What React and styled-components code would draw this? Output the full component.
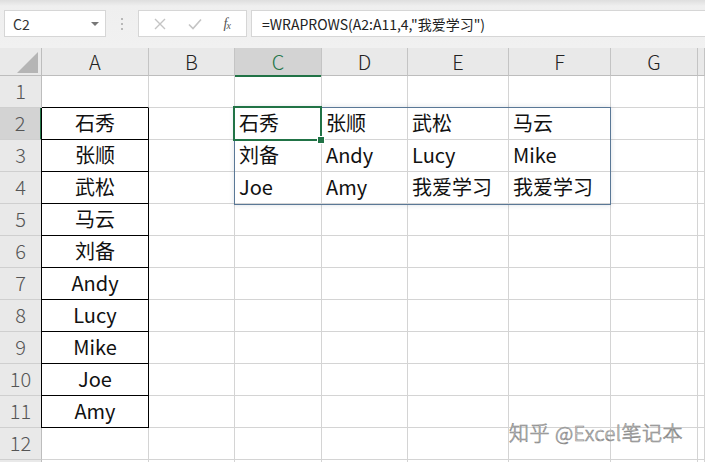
import React from 'react';
import styled, { createGlobalStyle } from 'styled-components';

const FONT = '"Noto Sans CJK SC", "Noto Sans", sans-serif';
const GREEN = '#217346';

const GlobalStyle = createGlobalStyle`
  html, body { margin: 0; padding: 0; background: #fff; overflow: hidden; }
  body { font-family: ${FONT}; }
`;

// column widths include the 1px right border
const COLS = [42, 107, 86, 87, 86, 101, 102, 87];
const LETTERS = ['A', 'B', 'C', 'D', 'E', 'F', 'G', ''];
const ROW_H = 32;

const names = ['石秀', '张顺', '武松', '马云', '刘备', 'Andy', 'Lucy', 'Mike', 'Joe', 'Amy'];
const spill = [
  ['石秀', '张顺', '武松', '马云'],
  ['刘备', 'Andy', 'Lucy', 'Mike'],
  ['Joe', 'Amy', '我爱学习', '我爱学习'],
];

// styling
const Page = styled.div`
  width: 705px;
  height: 462px;
  overflow: hidden;
  display: flex;
  flex-direction: column;
  font-family: ${FONT};
`;
const Toolbar = styled.div`
  height: 48px;
  flex: none;
  box-sizing: border-box;
  padding: 10px 0 11px 4px;
  display: flex;
  align-items: stretch;
  background: linear-gradient(#dedede 0, #efefef 6px, #f1f1f1 100%);
`;
const NameBox = styled.div`
  width: 102px;
  box-sizing: border-box;
  border: 1px solid #d6d6d6;
  background: #fff;
  display: flex;
  align-items: center;
  justify-content: space-between;
  padding: 0 6px 0 8px;
  font-size: 14px;
  color: #333;
`;
const Caret = styled.span`
  width: 0;
  height: 0;
  border-left: 4px solid transparent;
  border-right: 4px solid transparent;
  border-top: 4px solid #777;
`;
const Dots = styled.div`
  width: 32px;
  display: flex;
  flex-direction: column;
  align-items: center;
  justify-content: center;
  gap: 3px;
  span { width: 2px; height: 2px; background: #b8b8b8; }
`;
const IconBox = styled.div`
  width: 109px;
  box-sizing: border-box;
  border: 1px solid #d6d6d6;
  background: #fff;
  display: flex;
  align-items: center;
  justify-content: space-around;
  padding: 0 6px 0 4px;
`;
const Fx = styled.span`
  font-family: "Liberation Serif", serif;
  font-style: italic;
  font-size: 14px;
  color: #555;
  letter-spacing: -1px;
  sub { font-size: 10px; vertical-align: -1px; }
`;
const FormulaBox = styled.div`
  flex: 1;
  margin-left: 4px;
  box-sizing: border-box;
  border: 1px solid #d6d6d6;
  border-right: none;
  background: #fff;
  display: flex;
  align-items: center;
  padding-left: 10px;
  font-size: 14px;
  color: #222;
  white-space: nowrap;
`;
const SheetWrap = styled.div`
  position: relative;
  flex: 1;
  overflow: hidden;
`;
const Sheet = styled.div`
  display: grid;
  grid-template-columns: ${COLS.map(c => c + 'px').join(' ')} 1fr;
  grid-template-rows: 28px repeat(13, ${ROW_H}px);
`;
const Corner = styled.div`
  background: #e9e9e9;
  border-right: 1px solid #bdbdbd;
  border-bottom: 1px solid #bdbdbd;
  display: flex;
  align-items: flex-end;
  justify-content: flex-end;
  padding: 0 3px 2px 0;
  &::after {
    content: '';
    width: 0;
    height: 0;
    border-left: 21px solid transparent;
    border-bottom: 21px solid #b5b5b5;
  }
`;
const ColHead = styled.div`
  background: ${p => (p.$active ? '#d3d3d3' : '#e9e9e9')};
  border-right: 1px solid #c4c4c4;
  border-bottom: ${p => (p.$active ? `2px solid ${GREEN}` : '1px solid #bdbdbd')};
  margin-bottom: ${p => (p.$active ? '-1px' : '0')};
  display: flex;
  align-items: center;
  justify-content: center;
  font-size: 20px;
  font-weight: 300;
  color: ${p => (p.$active ? GREEN : '#222')};
`;
const RowHead = styled.div`
  background: ${p => (p.$active ? '#d3d3d3' : '#e9e9e9')};
  border-right: ${p => (p.$active ? `2px solid ${GREEN}` : '1px solid #bdbdbd')};
  border-bottom: 1px solid #cfcfcf;
  display: flex;
  align-items: center;
  justify-content: center;
  padding-bottom: 2px;
  font-size: 20px;
  font-weight: 300;
  color: #555;
`;
const Cell = styled.div`
  position: relative;
  border-right: 1px solid ${p => (p.$boxed ? '#000' : '#d4d4d4')};
  border-bottom: 1px solid ${p => (p.$boxed || p.$capTop ? '#000' : '#d4d4d4')};
  box-shadow: ${p => (p.$boxed ? '-1px 0 0 #000' : 'none')};
  display: flex;
  align-items: center;
  justify-content: ${p => (p.$center ? 'center' : 'flex-start')};
  padding-left: ${p => (p.$center ? '0' : '4px')};
  padding-bottom: 2px;
  font-size: 20px;
  color: #111;
  white-space: nowrap;
  overflow: visible;
`;
const SpillFrame = styled.div`
  position: absolute;
  left: 234px;
  top: 59px;
  width: 377px;
  height: 98px;
  box-sizing: border-box;
  border: 1px solid #5a7896;
  box-shadow: 0 0 5px rgba(60, 80, 110, 0.18);
  pointer-events: none;
`;
const ActiveCell = styled.div`
  position: absolute;
  left: 233px;
  top: 58px;
  width: 89px;
  height: 35px;
  box-sizing: border-box;
  border: 2px solid ${GREEN};
  pointer-events: none;
`;
const FillHandle = styled.div`
  position: absolute;
  right: -5px;
  bottom: -5px;
  width: 6px;
  height: 6px;
  background: ${GREEN};
  border: 1px solid #fff;
`;
const Watermark = styled.div`
  position: absolute;
  left: 509px;
  top: 370px;
  font-size: 20px;
  font-weight: 300;
  color: #fff;
  -webkit-text-stroke: 0.7px #8a8a8a;
  letter-spacing: 0.5px;
  white-space: nowrap;
`;

const XIcon = () => (
  <svg width="14" height="14" viewBox="0 0 14 14">
    <path d="M2 2 L12 12 M12 2 L2 12" stroke="#c4c4c4" strokeWidth="1.4" fill="none" />
  </svg>
);
const CheckIcon = () => (
  <svg width="16" height="14" viewBox="0 0 16 14">
    <path d="M2 7.5 L6 11.5 L14 2.5" stroke="#c4c4c4" strokeWidth="1.6" fill="none" />
  </svg>
);

const cellText = (r, c) => {
  if (c === 0 && r >= 2 && r <= 11) return names[r - 2];
  if (c >= 2 && c <= 5 && r >= 2 && r <= 4) return spill[r - 2][c - 2];
  return '';
};

const App = () => {
  const rows = Array.from({ length: 13 }, (_, i) => i + 1);
  return (
    <Page>
      <GlobalStyle />
      <Toolbar>
        <NameBox>C2<Caret /></NameBox>
        <Dots><span /><span /><span /></Dots>
        <IconBox>
          <XIcon />
          <CheckIcon />
          <Fx>f<sub>x</sub></Fx>
        </IconBox>
        <FormulaBox>=WRAPROWS(A2:A11,4,"我爱学习")</FormulaBox>
      </Toolbar>
      <SheetWrap>
        <Sheet>
          <Corner />
          {LETTERS.map((l, i) => (
            <ColHead key={i} $active={l === 'C'}>{l}</ColHead>
          ))}
          {rows.map(r => (
            <React.Fragment key={r}>
              <RowHead $active={r === 2}>{r <= 12 ? r : ''}</RowHead>
              {LETTERS.map((l, c) => (
                <Cell
                  key={c}
                  $boxed={c === 0 && r >= 2 && r <= 11}
                  $capTop={c === 0 && r === 1}
                  $center={c === 0}
                >
                  {cellText(r, c)}
                </Cell>
              ))}
            </React.Fragment>
          ))}
        </Sheet>
        <SpillFrame />
        <ActiveCell><FillHandle /></ActiveCell>
        <Watermark>知乎 @Excel笔记本</Watermark>
      </SheetWrap>
    </Page>
  );
};

export default App;
